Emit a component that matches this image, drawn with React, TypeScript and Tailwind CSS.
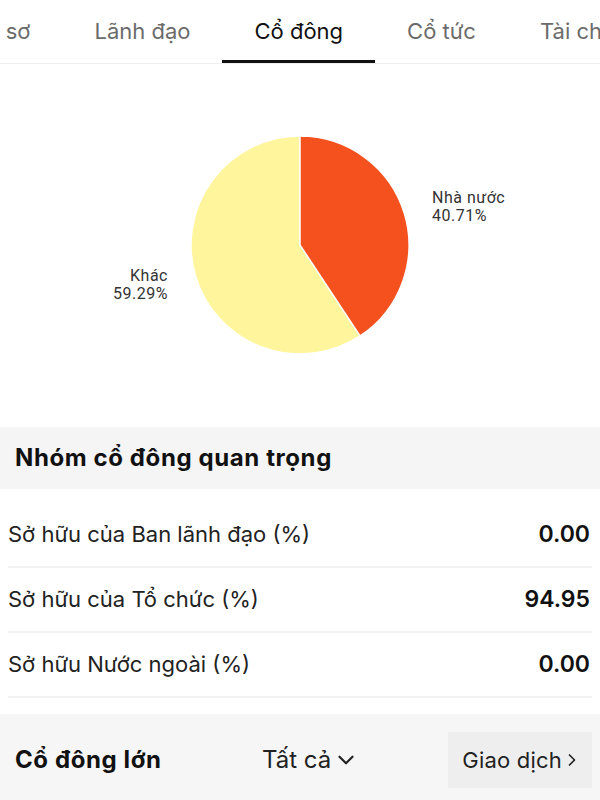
import React from 'react';
import { ChevronDown, ChevronRight } from 'lucide-react';

const tabs = ['Hồ sơ', 'Lãnh đạo', 'Cổ đông', 'Cổ tức', 'Tài chính'];

const groups = [
  { label: 'Sở hữu của Ban lãnh đạo (%)', value: '0.00' },
  { label: 'Sở hữu của Tổ chức (%)', value: '94.95' },
  { label: 'Sở hữu Nước ngoài (%)', value: '0.00' },
];

// pie: Nhà nước 40.71%, Khác 59.29%
function OwnershipPie() {
  const cx = 300;
  const cy = 246;
  const r = 109;
  const angle = 0.4071 * Math.PI * 2;
  const ex = cx + r * Math.sin(angle);
  const ey = cy - r * Math.cos(angle);

  return (
    <svg width="600" height="363" viewBox="0 65 600 363" className="block">
      <path
        d={`M${cx},${cy} L${ex},${ey} A${r},${r} 0 1 1 ${cx},${cy - r} Z`}
        fill="#fff59d"
        stroke="#ffffff"
        strokeWidth="1.5"
      />
      <path
        d={`M${cx},${cy} L${cx},${cy - r} A${r},${r} 0 0 1 ${ex},${ey} Z`}
        fill="#f4511e"
        stroke="#ffffff"
        strokeWidth="1.5"
      />
      <g fontFamily="Roboto, 'Liberation Sans', sans-serif" fontSize="16" letterSpacing="0.5" fill="#333333">
        <text x="432" y="204">Nhà nước</text>
        <text x="432" y="222">40.71%</text>
        <text x="168" y="282" textAnchor="end">Khác</text>
        <text x="168" y="300" textAnchor="end">59.29%</text>
      </g>
    </svg>
  );
}

export default function App() {
  return (
    <div className="w-[600px] h-[800px] overflow-hidden bg-white font-['Inter','Liberation_Sans',sans-serif] text-[#222]">
      {/* tabs (scrolled row, edges cut off like the app) */}
      <div className="h-[64px] border-b border-[#eeeeee] overflow-hidden">
        <div className="flex h-full ml-[-62px] whitespace-nowrap">
          {tabs.map((t) => {
            const active = t === 'Cổ đông';
            return (
              <div
                key={t}
                className={
                  active
                    ? 'h-full flex items-center px-[32px] pt-[2px] text-[22px] text-[#111] border-b-[3px] border-[#111]'
                    : 'h-full flex items-center px-[32px] pb-[1px] text-[22px] text-[#6b6b6b]'
                }
              >
                {t}
              </div>
            );
          })}
        </div>
      </div>

      <OwnershipPie />

      {/* important holder groups */}
      <div className="h-[62px] bg-[#f5f5f5] flex items-center pl-[15px] text-[24px] font-bold tracking-[0.6px] text-[#111]">
        Nhóm cổ đông quan trọng
      </div>

      <div className="mt-[14px] px-[8px]">
        {groups.map((g) => (
          <div
            key={g.label}
            className="h-[65px] flex items-center justify-between border-b-[2px] border-[#f2f2f2] text-[22px]"
          >
            <span className="text-[#222]">{g.label}</span>
            <span className="font-semibold text-[23px] text-[#111] pr-[2px]">{g.value}</span>
          </div>
        ))}
      </div>

      <div className="mt-[16px] h-[100px] bg-[#f6f6f6] pt-[18px] flex items-start">
        <div className="w-[262px] h-[56px] flex items-center pl-[15px] text-[24px] font-bold tracking-[0.6px] text-[#111]">
          Cổ đông lớn
        </div>
        <div className="h-[56px] flex items-center gap-[2px] text-[24px] text-[#222]">
          Tất cả
          <ChevronDown size={26} strokeWidth={2} />
        </div>
        <div className="ml-auto mr-[8px] h-[56px] flex items-center pl-[14px] pr-[10px] bg-[#eeeeee] text-[22px] tracking-[0.2px] text-[#222]">
          Giao dịch
          <ChevronRight size={20} strokeWidth={2} />
        </div>
      </div>
    </div>
  );
}
